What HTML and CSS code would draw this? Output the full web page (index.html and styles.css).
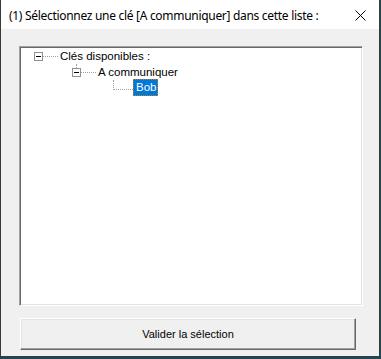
FILE: index.html
```html
<!DOCTYPE html>
<html lang="fr">
<head>
    <meta charset="UTF-8">
    <title>Sélection de clé</title>
    <link rel="stylesheet" href="styles.css">
</head>
<body>
    <div class="window">
        <div class="titlebar">
            <span class="title">(1) Sélectionnez une clé [A communiquer] dans cette liste :</span>
            <svg class="close" width="11" height="11" viewBox="0 0 11 11">
                <path d="M0.5 0.5 L10.5 10.5 M10.5 0.5 L0.5 10.5" stroke="#000" stroke-width="1" fill="none"/>
            </svg>
        </div>

        <div class="content">
            <!-- arbre des clés -->
            <div class="tree">
                <div class="row level1">
                    <span class="toggle"></span>
                    <span class="dash"></span>
                    <span class="label">Clés disponibles :</span>
                </div>
                <div class="row level2">
                    <span class="toggle up"></span>
                    <span class="dash"></span>
                    <span class="label">A communiquer</span>
                </div>
                <div class="row level3">
                    <span class="elbow"></span>
                    <span class="label selected">Bob</span>
                </div>
            </div>

            <button class="valider">Valider la sélection</button>
        </div>
    </div>
</body>
</html>
```

FILE: styles.css
```css
body {
    margin: 0;
    background-color: #1e4a58; /* bureau derrière la fenêtre */
    font-family: 'Liberation Sans', Arial, sans-serif;
}

.window {
    width: 380px;
    height: 357px;
    box-sizing: border-box;
    border-left: 1px solid #3a3a3a;
    border-right: 1px solid #3a3a3a;
    border-bottom: 1px solid #3a3a3a;
    background-color: #f0f0f0;
    display: flex;
    flex-direction: column;
}

.titlebar {
    height: 29px;
    background-color: #ffffff;
    display: flex;
    align-items: center;
    padding-left: 8px;
    padding-right: 13px;
    justify-content: space-between;
}

.title {
    font-family: 'Noto Sans', sans-serif;
    font-size: 12px;
    letter-spacing: -0.3px;
    color: #000;
    margin-top: 1px;
}

.close {
    display: block;
    margin-top: 2px;
}

.content {
    flex: 1;
    display: flex;
    flex-direction: column;
    padding: 17px 16px 0 18px;
}

.tree {
    height: 260px;
    box-sizing: border-box;
    background-color: #ffffff;
    border: 1px solid;
    border-color: #a0a0a0 #ffffff #ffffff #a0a0a0;
    box-shadow: inset 1px 1px 0 #696969, inset -1px -1px 0 #e3e3e3;
    padding-top: 1px;
    font-size: 11.5px;
    color: #000;
}

.row {
    height: 16px;
    display: flex;
    align-items: center;
}

.level1 { padding-left: 14px; }
.level2 { padding-left: 52px; }
.level3 { padding-left: 93px; align-items: flex-start; }

.toggle {
    width: 9px;
    height: 9px;
    box-sizing: border-box;
    border: 1px solid #919191;
    background-color: #fff;
    position: relative;
    flex-shrink: 0;
}

.toggle::after {
    content: "";
    position: absolute;
    left: 1px;
    top: 3px;
    width: 5px;
    height: 1px;
    background-color: #000;
}

/* trait vertical qui relie au parent */
.toggle.up::before {
    content: "";
    position: absolute;
    left: 3px;
    top: -5px;
    height: 4px;
    border-left: 1px dotted #a0a0a0;
}

.dash {
    width: 15px;
    margin-right: 2px;
    border-top: 1px dotted #a0a0a0;
}

.label {
    white-space: nowrap;
}

.elbow {
    width: 19px;
    height: 9px;
    border-left: 1px dotted #a0a0a0;
    border-bottom: 1px dotted #a0a0a0;
}

.selected {
    background-color: #0078d7;
    color: #fff;
    border: 1px dotted #c87c1e;
    padding: 1px 1px 1px 2px;
    line-height: 13px;
    margin-top: -1px;
}

.valider {
    margin-top: 12px;
    margin-left: 1px;
    width: 336px;
    height: 32px;
    box-sizing: border-box;
    background-color: #f0f0f0;
    border: 1px solid;
    border-color: #ffffff #696969 #696969 #ffffff;
    box-shadow: inset -1px -1px 0 #a0a0a0, inset 1px 1px 0 #e3e3e3;
    font-family: 'Liberation Sans', Arial, sans-serif;
    font-size: 11px;
    color: #000;
    padding: 0;
}
```
